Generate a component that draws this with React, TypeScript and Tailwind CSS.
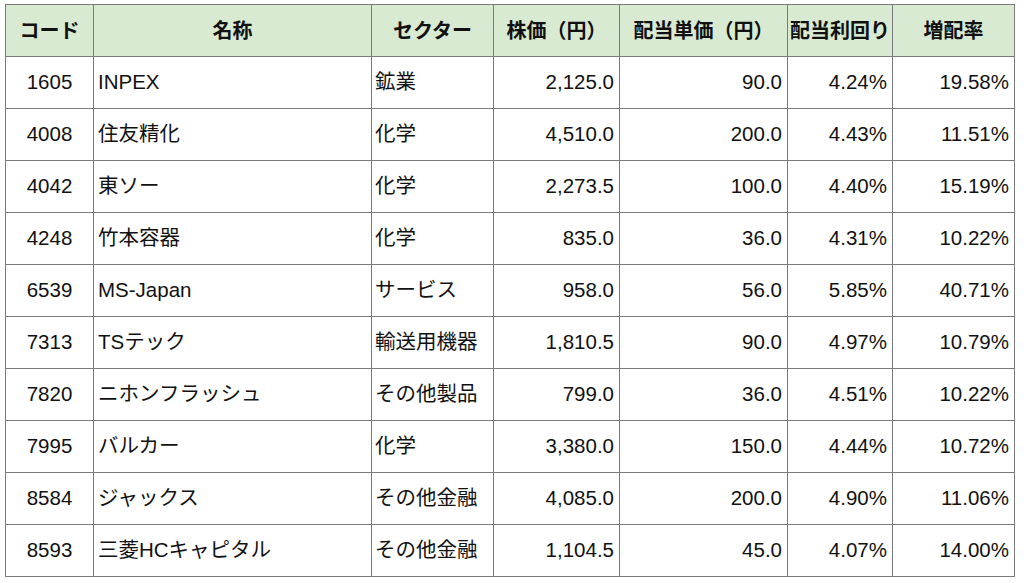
const COLUMNS = [
  { label: 'コード', width: 88 },
  { label: '名称', width: 278 },
  { label: 'セクター', width: 122 },
  { label: '株価（円）', width: 126 },
  { label: '配当単価（円）', width: 168 },
  { label: '配当利回り', width: 105 },
  { label: '増配率', width: 122 },
];

const ROWS: [string, string, string, string, string, string, string][] = [
  ['1605', 'INPEX', '鉱業', '2,125.0', '90.0', '4.24%', '19.58%'],
  ['4008', '住友精化', '化学', '4,510.0', '200.0', '4.43%', '11.51%'],
  ['4042', '東ソー', '化学', '2,273.5', '100.0', '4.40%', '15.19%'],
  ['4248', '竹本容器', '化学', '835.0', '36.0', '4.31%', '10.22%'],
  ['6539', 'MS-Japan', 'サービス', '958.0', '56.0', '5.85%', '40.71%'],
  ['7313', 'TSテック', '輸送用機器', '1,810.5', '90.0', '4.97%', '10.79%'],
  ['7820', 'ニホンフラッシュ', 'その他製品', '799.0', '36.0', '4.51%', '10.22%'],
  ['7995', 'バルカー', '化学', '3,380.0', '150.0', '4.44%', '10.72%'],
  ['8584', 'ジャックス', 'その他金融', '4,085.0', '200.0', '4.90%', '11.06%'],
  ['8593', '三菱HCキャピタル', 'その他金融', '1,104.5', '45.0', '4.07%', '14.00%'],
];

const cell = 'border border-[#7a7a7a] h-[52px] p-0 leading-none whitespace-nowrap';

export default function App() {
  return (
    <div
      className="w-[1024px] h-[583px] bg-white pl-[5px] pt-[4px] text-[#111]"
      style={{ fontFamily: '"Liberation Sans", "Noto Sans CJK JP", sans-serif' }}
    >
      <table className="table-fixed border-collapse w-[1009px] text-[20.5px]">
        <colgroup>
          {COLUMNS.map((c) => (
            <col key={c.label} style={{ width: c.width }} />
          ))}
        </colgroup>
        <thead>
          <tr className="bg-[#d9ead3]">
            {COLUMNS.map((c) => (
              <th key={c.label} className={`${cell} font-bold text-center text-[20px]`}>
                {c.label}
              </th>
            ))}
          </tr>
        </thead>
        <tbody>
          {ROWS.map((r) => (
            <tr key={r[0]}>
              <td className={`${cell} text-center`}>{r[0]}</td>
              <td className={`${cell} text-left pl-[4px]`}>{r[1]}</td>
              <td className={`${cell} text-left pl-[3px]`}>{r[2]}</td>
              <td className={`${cell} text-right pr-[5px]`}>{r[3]}</td>
              <td className={`${cell} text-right pr-[5px]`}>{r[4]}</td>
              <td className={`${cell} text-right pr-[5px]`}>{r[5]}</td>
              <td className={`${cell} text-right pr-[5px]`}>{r[6]}</td>
            </tr>
          ))}
        </tbody>
      </table>
    </div>
  );
}
